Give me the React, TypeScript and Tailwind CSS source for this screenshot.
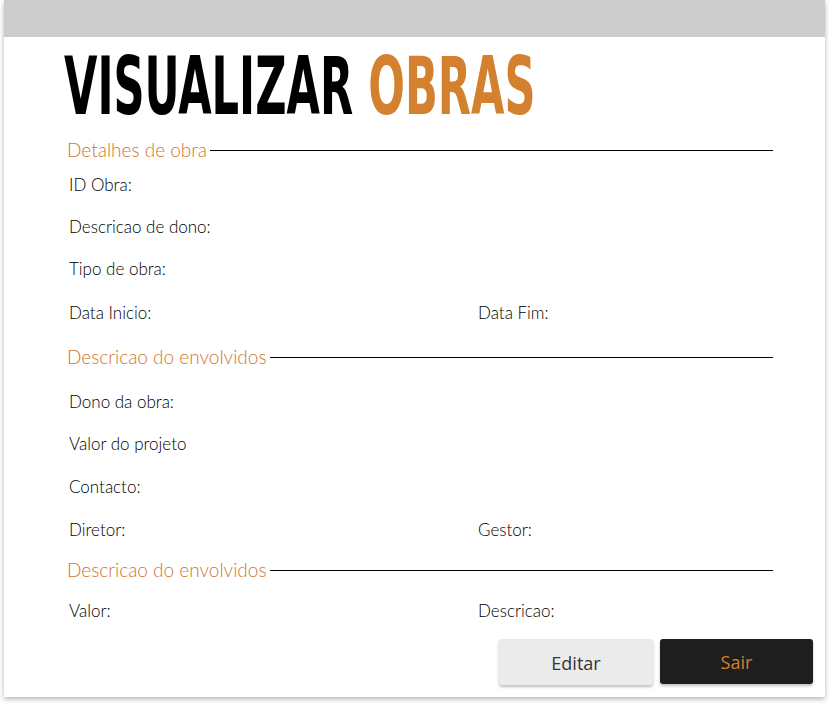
const bodyFont = { fontFamily: '"Lato", "Open Sans", sans-serif' };

function SectionTitle({ children, className }: { children: string; className?: string }) {
  return (
    <div className={`flex items-center gap-[3px] h-[20px] -ml-[2px] ${className ?? ''}`}>
      <span className="text-[19px] font-light leading-[20px] text-[#cf7631] whitespace-nowrap">{children}</span>
      <div className="flex-1 h-px bg-black" />
    </div>
  );
}

function Row({ left, right, className }: { left: string; right?: string; className?: string }) {
  return (
    <div className={`grid grid-cols-[409px_1fr] h-[20px] text-[17px] font-light leading-[20px] text-black ${className ?? ''}`}>
      <span>{left}</span>
      {right && <span>{right}</span>}
    </div>
  );
}

export default function App() {
  return (
    <div className="w-full h-[705px] bg-white">
      <div className="ml-[4px] w-[821px] h-[697px] bg-white shadow-[0_2px_5px_rgba(0,0,0,0.3)] flex flex-col">
        <div className="h-[37px] bg-[#cccccc]" />

        <div className="pl-[65px] pr-[52px] flex flex-col" style={bodyFont}>
          {/* Title */}
          <div className="h-[86px] -ml-[5px] pt-[10px] overflow-visible">
            <h1
              className="inline-block origin-left scale-x-[0.6] text-[80px] font-bold leading-[80px] tracking-[0px] whitespace-nowrap"
              style={{ fontFamily: '"DejaVu Sans Condensed", "DejaVu Sans", sans-serif' }}
            >
              <span className="text-black">VISUALIZAR </span>
              <span className="text-[#d4812f]">OBRAS</span>
            </h1>
          </div>

          <SectionTitle className="mt-[17px]">Detalhes de obra</SectionTitle>
          <Row className="mt-[15px]" left="ID Obra:" />
          <Row className="mt-[22px]" left="Descricao de dono:" />
          <Row className="mt-[22px]" left="Tipo de obra:" />
          <Row className="mt-[24px]" left="Data Inicio:" right="Data Fim:" />

          <SectionTitle className="mt-[24px]">Descricao do envolvidos</SectionTitle>
          <Row className="mt-[25px]" left="Dono da obra:" />
          <Row className="mt-[22px]" left="Valor do projeto" />
          <Row className="mt-[23px]" left="Contacto:" />
          <Row className="mt-[23px]" left="Diretor:" right="Gestor:" />

          <SectionTitle className="mt-[20px]">Descricao do envolvidos</SectionTitle>
          <Row className="mt-[21px]" left="Valor:" right="Descricao:" />
        </div>

        <div
          className="mt-[18px] flex justify-end gap-[7px] pr-[12px]"
          style={{ fontFamily: '"Open Sans", "Noto Sans", sans-serif' }}
        >
          <button className="w-[154px] h-[46px] pt-[2px] rounded-[3px] bg-[#ebebeb] text-[#333333] text-[18px] shadow-[0_2px_3px_rgba(0,0,0,0.25)]">
            Editar
          </button>
          <button className="w-[153px] h-[45px] pt-[2px] rounded-[3px] bg-[#1e1e1e] text-[#d4802f] text-[18px] shadow-[0_2px_3px_rgba(0,0,0,0.25)]">
            Sair
          </button>
        </div>
      </div>
    </div>
  );
}
